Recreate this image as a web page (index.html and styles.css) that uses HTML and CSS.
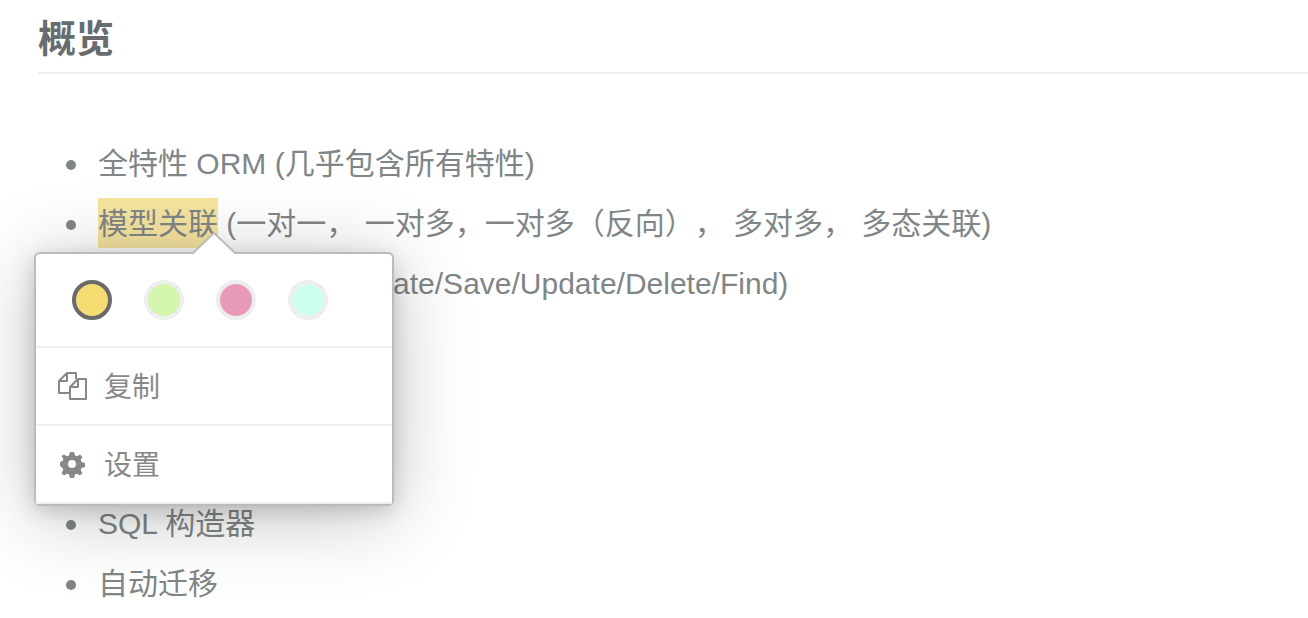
FILE: index.html
```html
<!DOCTYPE html>
<html lang="zh-CN">
<head>
<meta charset="utf-8">
<title>概览</title>
<link rel="stylesheet" href="styles.css">
</head>
<body>
<main class="article">
  <h2 class="heading">概览</h2>
  <ul class="features">
    <li>全特性 ORM (几乎包含所有特性)</li>
    <li class="annotated"><mark class="highlight">模型关联</mark> (一对一， 一对多，一对多（反向）， 多对多， 多态关联)
      <div class="popover">
        <svg class="arrow" viewBox="0 0 44 22" aria-hidden="true"><path d="M1 22 22 1 43 22Z" fill="#fff"/><path d="M1 21 22 1 43 21" fill="none" stroke="#bbb" stroke-width="2"/></svg>
        <div class="swatches">
          <button class="swatch yellow selected" type="button" aria-label="黄色"></button>
          <button class="swatch green" type="button" aria-label="绿色"></button>
          <button class="swatch pink" type="button" aria-label="粉色"></button>
          <button class="swatch mint" type="button" aria-label="薄荷色"></button>
        </div>
        <button class="action" type="button">
          <svg class="icon" viewBox="0 0 30 30" fill="none" stroke="#888" stroke-width="2" stroke-linejoin="round" aria-hidden="true"><path d="M11 22H1V10L9 2H18V8M9 2V10H1M20 8H28V28H12V16ZM20 8V16H12"/></svg>
          <span>复制</span>
        </button>
        <button class="action" type="button">
          <svg class="icon" viewBox="0 0 30 30" aria-hidden="true"><path fill="#888" fill-rule="evenodd" d="M12 3h4l1 3.500 2 .8 3-1.800 2.500 2.500-1.800 3 .8 2 3.500 1v4l-3.500 1-.8 2 1.800 3-2.500 2.500-3-1.800-2 .8-1 3.500h-4l-1-3.500-2-.8-3 1.800-2.500-2.500 1.800-3-.8-2L2 17v-4l2.500-1 .8-2-1.800-3L6 5.500l3 1.800 2-.8ZM14 11a4 4 0 1 0 0 8 4 4 0 0 0 0-8Z"/></svg>
          <span>设置</span>
        </button>
      </div>
    </li>
    <li>钩子 (Before/After Create/Save/Update/Delete/Find)</li>
    <li></li>
    <li></li>
    <li></li>
    <li>SQL 构造器</li>
    <li>自动迁移</li>
  </ul>
</main>
</body>
</html>
```
FILE: styles.css
```css
* {
  box-sizing: border-box;
}

body {
  margin: 0;
  background: #fff;
  color: #808687;
  font-family: "Liberation Sans", "Noto Sans CJK SC", sans-serif;
  text-spacing-trim: space-all;
}

.article {
  padding-left: 38px;
}

.heading {
  margin: 0;
  padding: 9px 0 3px;
  border-bottom: 2px solid #eee;
  color: #666c70;
  font-size: 38px;
  line-height: 60px;
}

.features {
  margin: 60px 0 0;
  padding-left: 60px;
  list-style: none;
  font-size: 30px;
  line-height: 60px;
}

.features li::before {
  content: "";
  display: inline-block;
  width: 10px;
  height: 10px;
  margin: 0 22px 0 -32px;
  border-radius: 50%;
  background: currentColor;
  vertical-align: 4px;
}

.annotated {
  position: relative;
}

.highlight {
  padding: 9px 0 8px;
  background: #f6e4a0;
  color: inherit;
}

.popover {
  position: absolute;
  z-index: 1;
  top: 58px;
  left: -64px;
  width: 360px;
  border: 2px solid #bbb;
  border-radius: 6px;
  background: #fff;
  box-shadow: 0 10px 80px rgba(0, 0, 0, 0.24), 0 5px 20px rgba(0, 0, 0, 0.16);
}

.arrow {
  position: absolute;
  top: -22px;
  left: 156px;
  width: 44px;
  height: 22px;
}

.swatches {
  display: flex;
  gap: 32px;
  padding: 26px 36px;
  border-bottom: 2px solid #eee;
}

.swatch {
  width: 40px;
  height: 40px;
  padding: 0;
  border: 4px solid #eee;
  border-radius: 50%;
}

.yellow { background: #f5dd74; }
.green { background: #d4f5ac; }
.pink { background: #e699b9; }
.mint { background: #cfffed; }

.selected {
  border-color: #6b6b6b;
}

.action {
  display: flex;
  align-items: center;
  gap: 16px;
  width: 100%;
  height: 78px;
  padding: 0 22px;
  border: 0;
  border-bottom: 2px solid #eee;
  background: none;
  color: #888;
  font: inherit;
  font-size: 28px;
  line-height: 40px;
}

.action span {
  padding-top: 3px;
}

.icon {
  width: 30px;
  height: 30px;
}
```
